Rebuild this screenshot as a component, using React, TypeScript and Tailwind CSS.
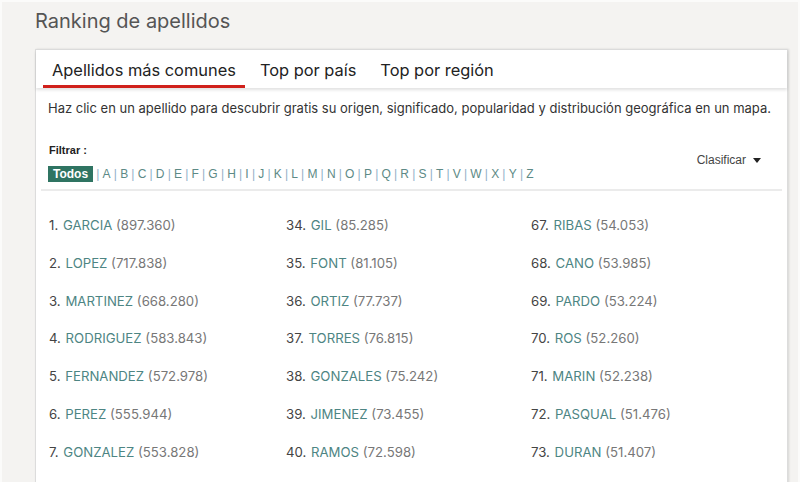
import React from "react";

const letters = "ABCDEFGHIJKLMNOPQRSTVWXYZ".split("");

const rows: [number, string, string][][] = [
  [
    [1, "GARCIA", "897.360"],
    [2, "LOPEZ", "717.838"],
    [3, "MARTINEZ", "668.280"],
    [4, "RODRIGUEZ", "583.843"],
    [5, "FERNANDEZ", "572.978"],
    [6, "PEREZ", "555.944"],
    [7, "GONZALEZ", "553.828"],
  ],
  [
    [34, "GIL", "85.285"],
    [35, "FONT", "81.105"],
    [36, "ORTIZ", "77.737"],
    [37, "TORRES", "76.815"],
    [38, "GONZALES", "75.242"],
    [39, "JIMENEZ", "73.455"],
    [40, "RAMOS", "72.598"],
  ],
  [
    [67, "RIBAS", "54.053"],
    [68, "CANO", "53.985"],
    [69, "PARDO", "53.224"],
    [70, "ROS", "52.260"],
    [71, "MARIN", "52.238"],
    [72, "PASQUAL", "51.476"],
    [73, "DURAN", "51.407"],
  ],
];

export default function App() {
  return (
    <div className="h-[482px] w-[800px] overflow-hidden border-x-2 border-t-2 border-[#fbfbfa] bg-[#f4f3f1] font-['Inter',sans-serif]">
      <div className="pl-[33px]">
        <h1 className="pt-[7px] text-[20px] leading-[24px] text-[#555]">Ranking de apellidos</h1>

        {/* card */}
        <div className="mt-[16px] h-[460px] w-[753px] border border-[#dcdcdc] bg-white shadow-[1px_0_2px_rgba(0,0,0,0.12)]">
          <div className="flex h-[38px] gap-[6px] pl-[7px] shadow-[0_2px_3px_rgba(0,0,0,0.12)]">
            <div className="border-b-[3px] border-[#d0201b] px-[9px] pt-[8px] text-[16.4px] leading-[24px] text-[#222]">
              Apellidos más comunes
            </div>
            <div className="px-[9px] pt-[8px] text-[16.4px] leading-[24px] text-[#222]">Top por país</div>
            <div className="px-[9px] pt-[8px] text-[16.4px] leading-[24px] text-[#222]">Top por región</div>
          </div>

          <div className="px-[12px]">
            <p className="pt-[11px] text-[13px] leading-[18px] text-[#333]">
              Haz clic en un apellido para descubrir gratis su origen, significado, popularidad y distribución geográfica en un mapa.
            </p>

            <div className="mt-[26px] flex justify-between pr-[14px] font-['Liberation_Sans',Arial,sans-serif]">
              <div>
                <div className="pl-px text-[11px] font-bold leading-[14px] text-[#222]">Filtrar :</div>
                <div className="mt-[9px] flex h-[16px] items-center text-[12px] leading-[16px] text-[#5d8a86]">
                  <span className="bg-[#2f7462] px-[5px] text-[12px] font-bold leading-[16px] text-white">Todos</span>
                  {letters.map((l) => (
                    <span key={l} className="flex items-center">
                      <span className="mx-[3.2px] text-[#8fb0c8]">|</span>
                      <span>{l}</span>
                    </span>
                  ))}
                </div>
              </div>
              <div className="mt-[8px] flex items-center gap-[7px] self-start text-[12px] leading-[18px] text-[#444]">
                Clasificar
                <svg width="8" height="5" viewBox="0 0 8 5" className="mt-px">
                  <path d="M0 0h8L4 5z" fill="#222" />
                </svg>
              </div>
            </div>

            <div className="mx-[-7px] mt-[7px] h-[2px] bg-[#ebebeb]" />

            <div className="flex pl-[1px] pt-[24px] text-[13.2px] leading-[20px]">
              {rows.map((col, ci) => (
                <div key={ci} className={ci === 0 ? "w-[237px]" : ci === 1 ? "w-[245px]" : "flex-1"}>
                  {col.map(([n, name, count]) => (
                    <div key={n} className="h-[37.8px]">
                      <span className="text-[#444]">{n}. </span>
                      <span className="ml-[1px] text-[#4d8583]">{name}</span>
                      <span className="text-[#777]"> ({count})</span>
                    </div>
                  ))}
                </div>
              ))}
            </div>
          </div>
        </div>
      </div>
    </div>
  );
}
